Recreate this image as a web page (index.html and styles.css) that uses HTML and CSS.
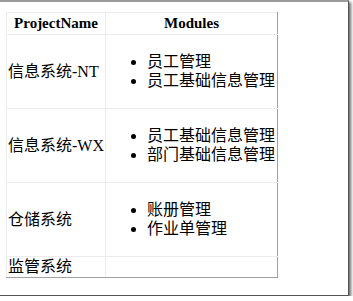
FILE: index.html
```html
<!DOCTYPE html>
<html>
<head>
<meta charset="utf-8">
<link rel="stylesheet" href="styles.css">
</head>
<body>
<div class="frame">
  <table class="grid">
    <colgroup><col class="c1"><col class="c2"></colgroup>
    <thead>
      <tr><th>ProjectName</th><th>Modules</th></tr>
    </thead>
    <tbody>
      <tr><td>信息系统-NT</td><td><ul><li>员工管理</li><li>员工基础信息管理</li></ul></td></tr>
      <tr><td>信息系统-WX</td><td><ul><li>员工基础信息管理</li><li>部门基础信息管理</li></ul></td></tr>
      <tr><td>仓储系统</td><td><ul><li>账册管理</li><li>作业单管理</li></ul></td></tr>
      <tr class="last"><td>监管系统</td><td></td></tr>
    </tbody>
  </table>
</div>
</body>
</html>
```
FILE: styles.css
```css
html, body { margin: 0; padding: 0; background: #fff; }
.frame {
  box-sizing: border-box;
  width: 349px;
  height: 296px;
  border-top: 2px solid #9a9a9a;
  border-right: 1px solid #555;
  border-bottom: 1px solid #555;
  box-shadow: 2px 2px 3px rgba(0,0,0,0.6);
  padding: 10px 0 0 6px;
  background: #fff;
  font-family: "Liberation Serif", "Noto Sans CJK SC", serif;
  font-size: 16px;
  color: #000;
}
.grid {
  border-collapse: collapse;
  table-layout: fixed;
  width: 271px;
}
.c1 { width: 99px; }
.c2 { width: 172px; }
.grid th, .grid td {
  border: 1px solid #ececec;
  padding: 1px;
  line-height: 19px;
  vertical-align: middle;
}
.grid th { font-size: 15px; font-weight: bold; text-align: center; line-height: 19px; }
.grid td { text-align: left; }
.grid tr > :last-child { border-right-color: #a0a0a0; }
.grid tr.last td { border-bottom-color: #a0a0a0; line-height: 18px; }
.grid ul { margin: 16px 0 17px; padding-left: 40px; }
.grid li { line-height: 19px; }
```
